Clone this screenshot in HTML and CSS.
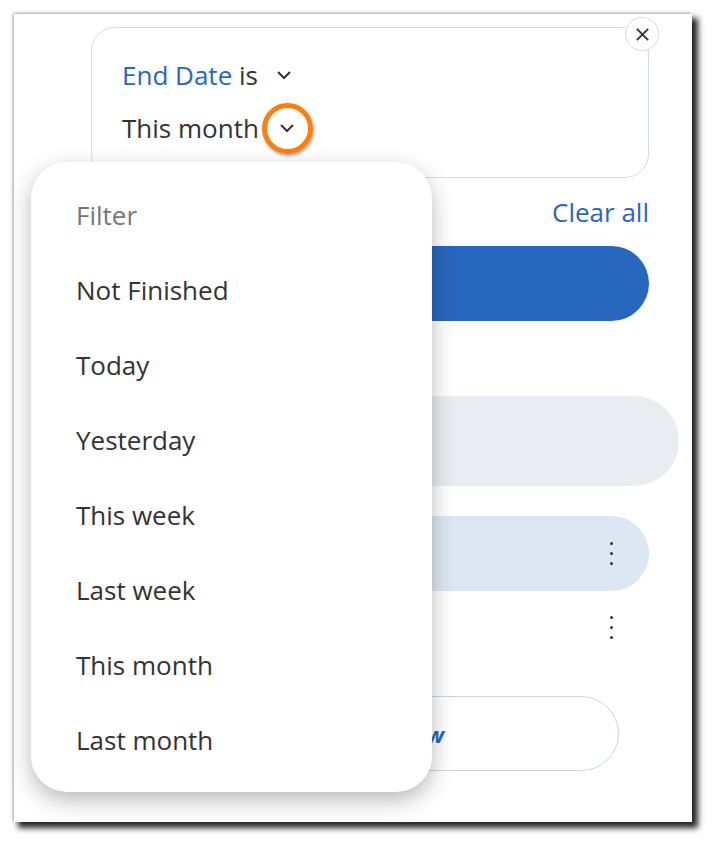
FILE: index.html
```html
<!DOCTYPE html>
<html lang="en">

<head>
    <meta charset="UTF-8" />
    <meta name="viewport" content="width=device-width, initial-scale=1.0" />
    <title>Filters</title>
    <link rel="stylesheet" href="styles.css">
</head>

<body>
    <div class="frame">
        <div class="content">
            <div class="filter-card">
                <div class="filter-row">
                    <span class="field">End Date</span>&nbsp;<span>is</span>
                    <svg class="chev" viewBox="0 0 16 10"><path d="M2 2l6 6 6-6" /></svg>
                </div>
                <div class="filter-row second">
                    <span>This month</span>
                    <span class="chev-wrap">
                        <svg class="chev" viewBox="0 0 16 10"><path d="M2 2l6 6 6-6" /></svg>
                        <span class="ring"></span>
                    </span>
                </div>
                <button class="close-btn" aria-label="Remove">
                    <svg viewBox="0 0 16 16"><path d="M2 2l12 12M14 2L2 14" /></svg>
                </button>
            </div>

            <div class="clear-row"><a class="clear-all">Clear all</a></div>

            <div class="primary-btn"></div>

            <div class="pill gray-pill"></div>

            <div class="pill list-item selected">
                <span class="kebab"><i></i><i></i><i></i></span>
            </div>
            <div class="list-item plain">
                <span class="kebab"><i></i><i></i><i></i></span>
            </div>

            <div class="pill outline-pill"><span class="link-text">View</span></div>
        </div>

        <div class="menu">
            <div class="menu-title">Filter</div>
            <div class="menu-item">Not Finished</div>
            <div class="menu-item">Today</div>
            <div class="menu-item">Yesterday</div>
            <div class="menu-item">This week</div>
            <div class="menu-item">Last week</div>
            <div class="menu-item">This month</div>
            <div class="menu-item">Last month</div>
        </div>
    </div>
</body>

</html>
```

FILE: styles.css
```css
html,
body {
    margin: 0;
    padding: 0;
    background: white;
    font-family: 'Open Sans', 'Noto Sans', sans-serif;
    color: #333;
}

body {
    padding-bottom: 27px;
}

.frame {
    position: relative;
    margin: 14px 0 0 14px;
    width: 678px;
    height: 808px;
    background: white;
    overflow: hidden;
    box-shadow: 5px 5px 6px 1px rgba(0, 0, 0, 0.85), -1px -1px 3px rgba(0, 0, 0, 0.3);
}

.content {
    padding: 13px 43px 0 77px;
    display: flex;
    flex-direction: column;
}

.filter-card {
    position: relative;
    height: 151px;
    box-sizing: border-box;
    border: 1px solid #d3dce4;
    border-radius: 24px;
    padding: 32px 0 0 30px;
    font-size: 26px;
}

.filter-row {
    display: flex;
    align-items: center;
    height: 30px;
    line-height: 30px;
}

.filter-row.second {
    margin-top: 23px;
}

.field {
    color: #2a66c0;
}

.chev {
    width: 16px;
    height: 10px;
    margin-left: 18px;
    fill: none;
    stroke: #333;
    stroke-width: 2;
}

.chev-wrap {
    position: relative;
    display: flex;
    align-items: center;
}

.chev-wrap .chev {
    margin-left: 20px;
}

.ring {
    position: absolute;
    left: 3px;
    top: 50%;
    width: 51px;
    height: 51px;
    margin-top: -25px;
    box-sizing: border-box;
    border: 5px solid #ff7f0e;
    border-radius: 50%;
    box-shadow: 1px 2px 3px rgba(0, 0, 0, 0.35);
}

.close-btn {
    position: absolute;
    right: -11px;
    top: -11px;
    width: 34px;
    height: 34px;
    padding: 0;
    border: 1px solid #d3dce4;
    border-radius: 50%;
    background: white;
    display: flex;
    align-items: center;
    justify-content: center;
}

.close-btn svg {
    width: 15px;
    height: 15px;
    stroke: #333;
    stroke-width: 2;
}

.clear-row {
    margin-top: 17px;
    text-align: right;
    line-height: 34px;
    font-size: 26px;
}

.clear-all {
    color: #2a66c0;
}

.primary-btn {
    margin-top: 17px;
    height: 75px;
    border-radius: 38px;
    background: #2767bd;
}

.pill {
    border-radius: 45px;
}

.gray-pill {
    margin-top: 75px;
    margin-right: -30px;
    height: 90px;
    background: #e9edf1;
}

.list-item {
    height: 75px;
    display: flex;
    align-items: center;
    justify-content: flex-end;
    padding-right: 36px;
}

.list-item.selected {
    margin-top: 30px;
    background: #dde7f3;
    border-radius: 38px;
}

.list-item.plain {
    height: 72px;
}

.kebab {
    display: flex;
    flex-direction: column;
    gap: 7px;
}

.kebab i {
    width: 3px;
    height: 3px;
    border-radius: 50%;
    background: #333;
}

.outline-pill {
    margin-top: 33px;
    margin-right: 30px;
    height: 75px;
    box-sizing: border-box;
    border: 1px solid #c9d5e0;
    border-radius: 38px;
    display: flex;
    align-items: center;
    padding-left: 303px;
}

.link-text {
    color: #2a66c0;
    font-weight: bold;
    font-style: italic;
    font-size: 22px;
}

.menu {
    position: absolute;
    left: 17px;
    top: 148px;
    width: 401px;
    height: 630px;
    box-sizing: border-box;
    padding: 16px 0 13px 45px;
    background: white;
    border-radius: 36px;
    box-shadow: 0 8px 22px rgba(0, 0, 0, 0.28);
    font-size: 26px;
}

.menu-title,
.menu-item {
    height: 75px;
    line-height: 75px;
}

.menu-title {
    color: #777;
}
```
